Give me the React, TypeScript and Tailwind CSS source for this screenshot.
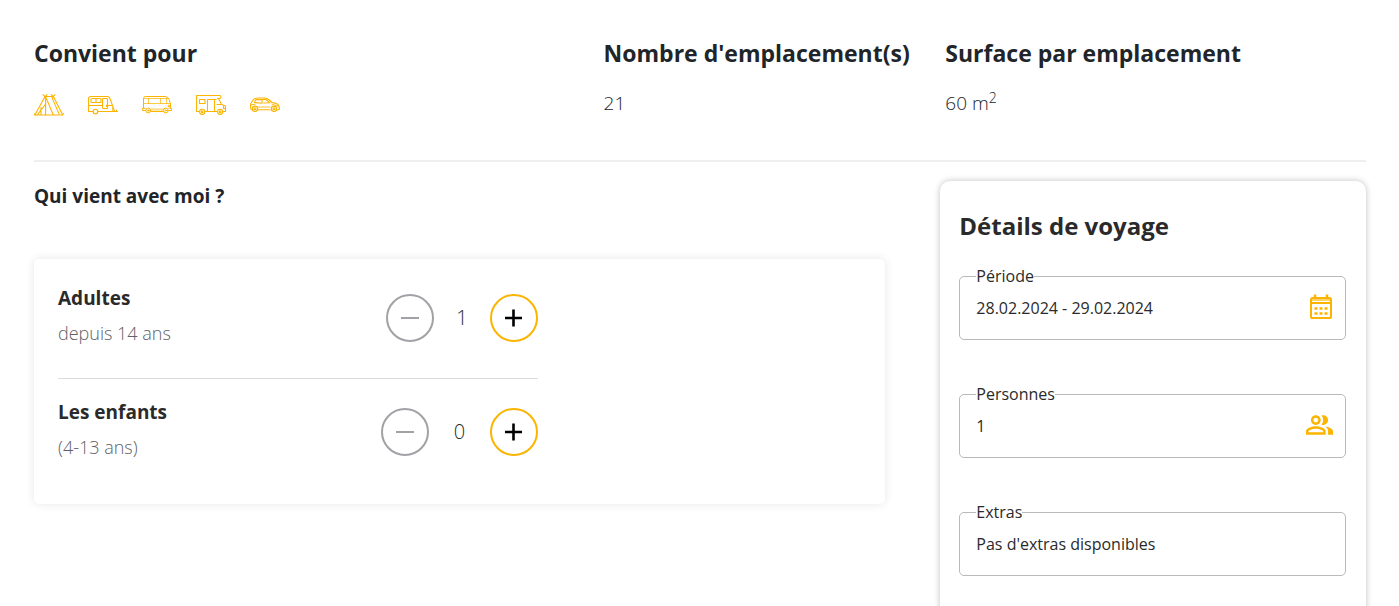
import { useState, type ReactNode } from "react";

function TentIcon() {
  return (
    <svg viewBox="0 0 30 22" className="h-[22px] w-[30px]" fill="none" stroke="#fcb400" strokeWidth="1.1" strokeLinecap="round" aria-hidden="true">
      <path d="M9 .6 11.400 3.200M13 .6 10.600 3.200M17.400.6 19.400 3.200M21 .6 18.600 3.200M11 2.500h8" />
      <path d="M10.800 3 1 20.800M11.600 3v18M12 3.600 19.200 20.800M18 3.600 25.400 20.600M19.400 2.600 28.600 20.800" />
      <path d="M11.200 10.500 3.600 20.600M7 13.500v7M.5 21h24.500M26.500 21h1.500M.5 19.800l1 1.400M29.500 19.600l-1.400 1.600" />
    </svg>
  );
}

function CaravanIcon() {
  return (
    <svg viewBox="0 0 30 22" className="h-[22px] w-[30px]" fill="none" stroke="#fcb400" strokeWidth="1.1" strokeLinecap="round" aria-hidden="true">
      <path d="M5 17.500H.6V4.500A2 2 0 0 1 2.600 2.500H19.500q1.600 0 2.400 2l3 8v5M9.800 17.500h15" />
      <path d="M.8 11.500h13.400M20 11.500h4.600M25 13.500l1.600 3.600M25 17.500h4.600M28.500 16v1.500" />
      <rect x="3" y="4.500" width="10" height="4" rx="1" />
      <path d="M8 4.500v4M18.500 11v1.500" />
      <rect x="14.500" y="4.500" width="5" height="10" rx=".8" />
      <circle cx="7.400" cy="17.500" r="2.300" />
    </svg>
  );
}

function BusIcon() {
  return (
    <svg viewBox="0 0 30 22" className="h-[22px] w-[30px]" fill="none" stroke="#fcb400" strokeWidth="1" strokeLinecap="round" aria-hidden="true">
      <path d="M1.500 14V4.500Q1.500 2.500 3.500 2.500H23q3 0 4.200 3L28.500 10v4" />
      <path d="M2 4.500h24M2 9.500h26M6.500 4.500v5M18.500 4.500v5M24.500 4.500v5" strokeOpacity=".7" />
      <path d="M3.400 16.500H.6v-2.200h2.400M26.800 16.500h2.700v-2.200h-2.500M9 17.500h12" />
      <path d="M9 15.500h12" strokeWidth="2.500" strokeOpacity=".4" />
      <circle cx="6.200" cy="16.500" r="2.400" />
      <circle cx="6.200" cy="16.500" r=".7" />
      <circle cx="23.800" cy="16.500" r="2.400" />
      <circle cx="23.800" cy="16.500" r=".7" />
      <circle cx="26.600" cy="12" r=".7" />
    </svg>
  );
}

function CamperIcon() {
  return (
    <svg viewBox="0 0 30 22" className="h-[22px] w-[30px]" fill="none" stroke="#fcb400" strokeWidth="1.1" strokeLinejoin="round" aria-hidden="true">
      <path d="M3.400 17.500H.6V1.500H23.400q1.600 0 1.600 1.500 0 1.500-2 1.500h-2M9 17.500h12.200M22.500 4.500 25.500 10.500 29.500 12v5.500H27" />
      <path d="M11.500 17.500V5.500M18.500 17.500V5.500M11.500 5.500h9M20.500 10.500h5M27.500 12v2.500h2" />
      <rect x="3.500" y="5.500" width="5.500" height="4" />
      <circle cx="6.200" cy="17.800" r="2.600" />
      <circle cx="6.200" cy="17.800" r=".8" />
      <circle cx="24.200" cy="17.800" r="2.600" />
      <circle cx="24.200" cy="17.800" r=".8" />
    </svg>
  );
}

function CarIcon() {
  return (
    <svg viewBox="0 0 30 22" className="h-[22px] w-[30px]" fill="none" stroke="#fcb400" strokeWidth="1.1" strokeLinecap="round" aria-hidden="true">
      <path d="M2.200 15.800Q.6 15.600.6 13.600V9.800L3.400 5.600Q5 4 9 4h5q3 0 5.400 2l2.600 2.600q5 .4 6.600 2.600.8 1.400.8 4l-1.800.8M8 15.800h12" />
      <path d="M4.400 8.600 6 5.600h6v3.600l-7.600-.6M13.200 5.400h2q2 .2 4.400 3.400l-6 .2" />
      <path d="M1 10.500h4M8 13h12M22 10.500l6.500 1.500" strokeOpacity=".8" />
      <circle cx="5" cy="14.800" r="2.700" />
      <circle cx="5" cy="14.800" r="1" />
      <circle cx="24" cy="14.800" r="2.700" />
      <circle cx="24" cy="14.800" r="1" />
    </svg>
  );
}

function CalendarIcon() {
  return (
    <svg viewBox="0 0 24 26" className="h-[26px] w-6" fill="none" stroke="#fcb400" strokeWidth="2" aria-hidden="true">
      <rect x="2" y="4" width="20" height="20" rx="1.600" />
      <path d="M2 6h20" strokeOpacity=".6" />
      <path d="M2 9h20" />
      <path d="M6 .5v3M18 .5v3" strokeWidth="2.500" />
      <path d="M5.500 14.500h3m2 0h3m2 0h3M5.500 19.500h3m2 0h3m2 0h3" strokeWidth="2.600" />
    </svg>
  );
}

function PeopleIcon() {
  return (
    <svg viewBox="1 4 22 16" className="h-5 w-[27px]" fill="#fcb400" aria-hidden="true">
      <path d="M16.670 13.130C18.040 14.060 19 15.320 19 17v3h4v-3c0-2.180-3.570-3.470-6.330-3.870z" />
      <path d="M15 12c2.210 0 4-1.790 4-4s-1.790-4-4-4c-.47 0-.91.1-1.330.24C14.500 5.270 15 6.580 15 8s-.5 2.730-1.330 3.760c.42.14.86.24 1.330.24z" />
      <path fillRule="evenodd" d="M9 12c2.210 0 4-1.790 4-4s-1.790-4-4-4-4 1.790-4 4 1.790 4 4 4zm0-6c1.100 0 2 .9 2 2s-.9 2-2 2-2-.9-2-2 .9-2 2-2zM9 13c-2.670 0-8 1.340-8 4v3h16v-3c0-2.660-5.330-4-8-4zm6 5H3v-.99C3.200 16.290 6.300 15 9 15s5.800 1.290 6 2v1z" />
    </svg>
  );
}

function Fact({ title, className, children }: { title: string; className: string; children: ReactNode }) {
  return (
    <section className={className}>
      <h2 className="text-[23px] font-bold leading-8 whitespace-nowrap">{title}</h2>
      <div className="mt-5 flex h-7 items-center text-[19px] font-[350]">{children}</div>
    </section>
  );
}

function Counter({ label, hint, min, countWidth }: { label: string; hint: string; min: number; countWidth: string }) {
  const [count, setCount] = useState(min);
  return (
    <div className="flex items-start justify-between">
      <div>
        <h4 className="text-[19px] font-bold leading-7">{label}</h4>
        <p className="mt-[7px] text-lg font-[350] leading-7 text-[#5f6166]">{hint}</p>
      </div>
      <div className="mt-[10px] flex items-center gap-6">
        <button
          type="button"
          aria-label={`Retirer : ${label}`}
          onClick={() => setCount(Math.max(min, count - 1))}
          className="flex size-12 items-center justify-center rounded-full border-2 border-[#a0a2a6]"
        >
          <span className="h-[2px] w-[18px] bg-[#a0a2a6]" />
        </button>
        <output className={`flex justify-center text-xl font-[350] leading-7 ${countWidth}`}>{count}</output>
        <button
          type="button"
          aria-label={`Ajouter : ${label}`}
          onClick={() => setCount(count + 1)}
          className="flex size-12 items-center justify-center rounded-full border-2 border-[#fcb400]"
        >
          <svg viewBox="0 0 18 18" className="size-[18px]" stroke="#000" strokeWidth="2.600" aria-hidden="true">
            <path d="M8.500.5v17M0 9h17" />
          </svg>
        </button>
      </div>
    </div>
  );
}

function Field({ id, label, value, icon }: { id: string; label: string; value: string; icon?: ReactNode }) {
  return (
    <fieldset className="rounded-[5px] border border-[#b9b9b9] pr-3 pl-4">
      <legend className="text-base leading-6">
        <label htmlFor={id}>{label}</label>
      </legend>
      <div className="flex h-[51px] items-start justify-between">
        <input id={id} readOnly value={value} className="h-10 min-w-0 flex-1 bg-transparent text-base outline-none" />
        <span className="flex h-[38px] items-center">{icon}</span>
      </div>
    </fieldset>
  );
}

export default function App() {
  return (
    <main className="overflow-hidden bg-white px-4 pt-[37px] font-['Open_Sans','Noto_Sans',sans-serif] text-[#212529]">
      <div className="grid grid-cols-12">
        <Fact title="Convient pour" className="col-span-5 px-[18px]">
          <div className="mt-1 flex gap-6">
            <TentIcon />
            <CaravanIcon />
            <BusIcon />
            <CamperIcon />
            <CarIcon />
          </div>
        </Fact>
        <Fact title="Nombre d'emplacement(s)" className="col-span-3 px-[18px]">
          21
        </Fact>
        <Fact title="Surface par emplacement" className="col-span-4 px-[18px]">
          <span>
            60 m<sup className="text-[14px]">2</sup>
          </span>
        </Fact>
      </div>
      <hr className="mr-[17px] ml-[18px] mt-[43px] border-t-2 border-[#efefef]" />
      <div className="grid grid-cols-12">
        <section className="col-span-8 pt-5 pr-[42px] pl-[18px]">
          <h3 className="text-[19px] font-bold leading-7">Qui vient avec moi ?</h3>
          <div className="mt-[49px] rounded-[5px] px-6 pt-[25px] pb-[43px] text-[#2a2a2a] shadow-[0_0_10px_rgba(0,0,0,0.1)]">
            <div className="flex max-w-[480px] flex-col">
              <Counter label="Adultes" hint="depuis 14 ans" min={1} countWidth="w-2" />
              <hr className="mt-[31px] mb-[19px] border-[#dcdcdc]" />
              <Counter label="Les enfants" hint="(4-13 ans)" min={0} countWidth="w-[13px]" />
            </div>
          </div>
        </section>
        <aside className="col-span-4 pt-[19px] pr-[17px] pl-[13px]">
          <div className="rounded-[10px] pt-[29px] pr-5 pb-12 pl-[19px] text-[#2a2a2a] shadow-[0_0_6px_rgba(0,0,0,0.25)]">
            <h2 className="text-2xl font-bold leading-8">Détails de voyage</h2>
            <div className="mt-[22px] flex flex-col gap-[42px]">
              <Field id="periode" label="Période" value="28.02.2024 - 29.02.2024" icon={<CalendarIcon />} />
              <Field id="personnes" label="Personnes" value="1" icon={<PeopleIcon />} />
              <Field id="extras" label="Extras" value="Pas d'extras disponibles" />
            </div>
          </div>
        </aside>
      </div>
    </main>
  );
}
